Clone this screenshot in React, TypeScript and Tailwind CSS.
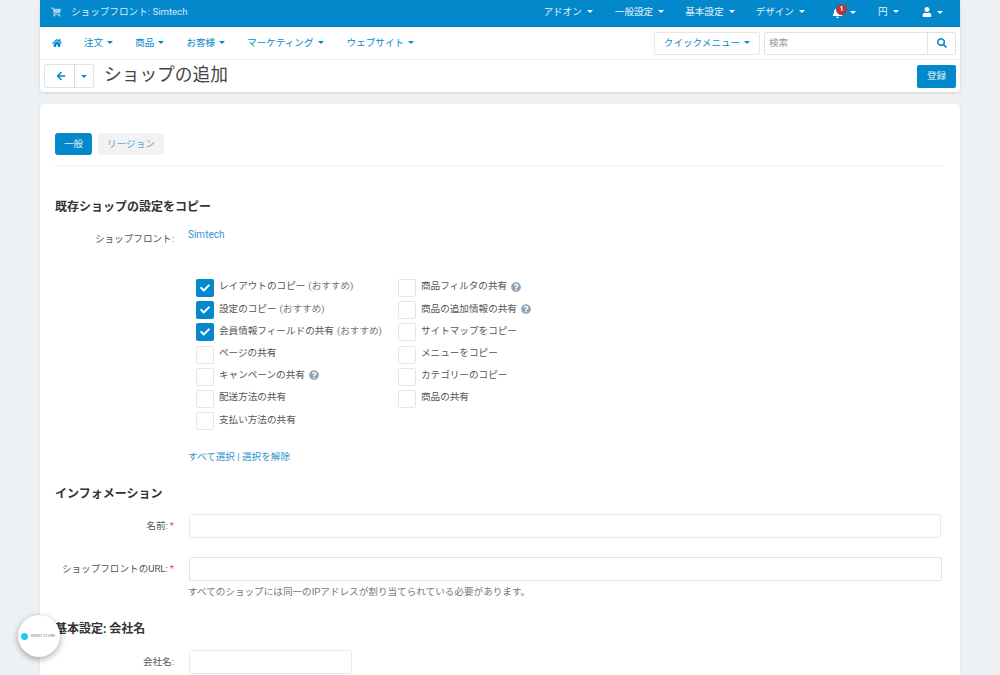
import { FaShoppingCart, FaHome, FaArrowLeft, FaBell, FaUser, FaSearch, FaCheck, FaQuestionCircle } from "react-icons/fa";

const Caret = ({ className = "border-t-white" }: { className?: string }) => (
  <span className={`inline-block w-0 h-0 border-x-[3px] border-x-transparent border-t-[3px] ${className}`} />
);

const TopItem = ({ label, className }: { label: string; className: string }) => (
  <span className={`flex items-center gap-[5px] text-[9.6px] text-[#e3f2fa] whitespace-nowrap ${className}`}>
    {label}
    <Caret />
  </span>
);

const NavItem = ({ label, className }: { label: string; className: string }) => (
  <span className={`flex items-center gap-[4px] text-[9.6px] text-[#0388cc] whitespace-nowrap ${className}`}>
    {label}
    <Caret className="border-t-[#0388cc]" />
  </span>
);

const Help = () => <FaQuestionCircle className="text-[#8fa3b5] text-[10px] ml-[4px] inline-block" />;

const Check = ({ label, note, help, on }: { label: string; note?: string; help?: boolean; on?: boolean }) => (
  <div className="flex items-center h-[22.2px]">
    {on ? (
      <span className="w-[18px] h-[18px] rounded-[2px] bg-[#0388cc] flex items-center justify-center shrink-0">
        <FaCheck className="text-white text-[10px]" />
      </span>
    ) : (
      <span className="w-[18px] h-[18px] rounded-[2px] border border-[#e6e6e6] bg-white shrink-0" />
    )}
    <span className="ml-[5px] mb-[3px] text-[9.6px] text-[#555] whitespace-nowrap flex items-center">
      {label}
      {note && <span className="text-[#777] ml-[3px]">{note}</span>}
      {help && <Help />}
    </span>
  </div>
);

const Label = ({ children, req, className = "" }: { children: React.ReactNode; req?: boolean; className?: string }) => (
  <div className={`w-[119px] text-right text-[9.6px] text-[#555] shrink-0 whitespace-nowrap ${className}`}>
    {children}
    {req && <span className="text-[#e5484d] ml-[2px]">*</span>}
  </div>
);

export default function App() {
  return (
    <div className="h-[675px] overflow-hidden bg-[#edf1f4] font-['Roboto','Noto_Sans_CJK_JP',sans-serif] relative">
      <div className="mx-[40px] w-[920px]">
        <div className="rounded-b-[4px] bg-white shadow-[0_1px_3px_rgba(0,0,0,0.12)]">
          <div className="h-[27px] bg-[#0388cc] border-b border-[#0379b5] flex items-center pl-[11px] pb-[2px]">
            <FaShoppingCart className="text-[#9fd2ee] text-[10px]" />
            <span className="ml-[10px] text-[9.6px] text-[#d7edf8] whitespace-nowrap">ショップフロント: Simtech</span>
            <TopItem label="アドオン" className="ml-[356px]" />
            <TopItem label="一般設定" className="ml-[22px]" />
            <TopItem label="基本設定" className="ml-[21px]" />
            <TopItem label="デザイン" className="ml-[21px]" />
            <span className="relative ml-[27px] flex items-center gap-[7px]">
              <FaBell className="text-white text-[11px]" />
              <span className="absolute -top-[3px] left-[4px] w-[11px] h-[11px] rounded-full bg-[#b03a3a] text-white text-[7px] font-bold flex items-center justify-center">1</span>
              <Caret />
            </span>
            <TopItem label="円" className="ml-[22px]" />
            <span className="ml-[23px] flex items-center gap-[5px]">
              <FaUser className="text-white text-[10px]" />
              <Caret />
            </span>
          </div>
          <div className="h-[33px] border-b border-[#f2f2f2] flex items-center pl-[12px] pr-[4px]">
            <FaHome className="text-[#0388cc] text-[10px]" />
            <NavItem label="注文" className="ml-[22px]" />
            <NavItem label="商品" className="ml-[22px]" />
            <NavItem label="お客様" className="ml-[22px]" />
            <NavItem label="マーケティング" className="ml-[22px]" />
            <NavItem label="ウェブサイト" className="ml-[23px]" />
            <div className="ml-auto h-[23px] w-[106px] rounded-[2px] border border-[#e6e8ea] flex items-center justify-center">
              <NavItem label="クイックメニュー" className="" />
            </div>
            <div className="ml-[4px] h-[23px] w-[192px] rounded-[2px] border border-[#e0e3e6] flex">
              <span className="flex-1 flex items-center pl-[4px] text-[9.6px] text-[#999]">検索</span>
              <span className="w-[28px] border-l border-[#e0e3e6] flex items-center justify-center">
                <FaSearch className="text-[#0388cc] text-[10px]" />
              </span>
            </div>
          </div>
          <div className="h-[32px] flex items-center pl-[4px] pr-[4px]">
            <div className="h-[24px] w-[50px] rounded-[2px] border border-[#e0e3e6] flex">
              <span className="w-[30px] border-r border-[#d5d9dd] flex items-center justify-center pl-[3px]">
                <FaArrowLeft className="text-[#0388cc] text-[10px]" />
              </span>
              <span className="flex-1 flex items-center justify-center">
                <Caret className="border-t-[#0388cc]" />
              </span>
            </div>
            <span className="ml-[10px] text-[17.7px] text-[#444] pb-[2px] whitespace-nowrap">ショップの追加</span>
            <span className="ml-auto w-[39px] h-[23px] rounded-[2px] bg-[#0388cc] text-[9.6px] text-[#e3f2fa] flex items-center justify-center">登録</span>
          </div>
        </div>

        <div className="mt-[12px] bg-white rounded-t-[4px] pl-[15px] pr-[16px] pt-[29px] h-[600px] shadow-[0_1px_3px_rgba(0,0,0,0.08)]">
          <div className="flex gap-[6px] pb-[10px] border-b border-[#f0f0f0]">
            <span className="w-[37px] h-[22px] rounded-[3px] bg-[#0388cc] text-[9.6px] text-[#e3f2fa] flex items-center justify-center">一般</span>
            <span className="w-[66px] h-[22px] rounded-[3px] bg-[#f2f2f2] text-[9.6px] text-[#5ba5d2] flex items-center justify-center">リージョン</span>
          </div>

          <h3 className="mt-[33px] text-[12px] font-bold text-[#333] leading-[16px]">既存ショップの設定をコピー</h3>

          <div className="mt-[14px] flex items-start">
            <Label className="mt-[3px] leading-[14px]">ショップフロント:</Label>
            <span className="ml-[14px] text-[10px] text-[#2f93cc] leading-[14px] -mt-[1px]">Simtech</span>
          </div>

          <div className="mt-[31px] ml-[141px] flex">
            <div className="w-[202px]">
              <Check on label="レイアウトのコピー" note="(おすすめ)" />
              <Check on label="設定のコピー" note="(おすすめ)" />
              <Check on label="会員情報フィールドの共有" note="(おすすめ)" />
              <Check label="ページの共有" />
              <Check label="キャンペーンの共有" help />
              <Check label="配送方法の共有" />
              <Check label="支払い方法の共有" />
            </div>
            <div>
              <Check label="商品フィルタの共有" help />
              <Check label="商品の追加情報の共有" help />
              <Check label="サイトマップをコピー" />
              <Check label="メニューをコピー" />
              <Check label="カテゴリーのコピー" />
              <Check label="商品の共有" />
            </div>
          </div>

          <div className="mt-[18px] ml-[133px] text-[9.6px] text-[#2f93cc] leading-[14px]">すべて選択 | 選択を解除</div>

          <h3 className="mt-[22px] text-[12px] font-bold text-[#333] leading-[16px]">インフォメーション</h3>

          <div className="mt-[12px] flex items-center">
            <Label req>名前:</Label>
            <div className="ml-[15px] w-[752px] h-[24px] rounded-[2px] border border-[#e8eaed] bg-white" />
          </div>

          <div className="mt-[19px] flex items-center">
            <Label req>ショップフロントのURL:</Label>
            <div className="ml-[15px] w-[753px] h-[24px] rounded-[2px] border border-[#dfe2e8] bg-white" />
          </div>
          <div className="mt-[4px] ml-[133px] text-[9.6px] text-[#777] leading-[14px]">すべてのショップには同一のIPアドレスが割り当てられている必要があります。</div>

          <h3 className="mt-[22px] text-[12px] font-bold text-[#333] leading-[16px]">基本設定: 会社名</h3>

          <div className="mt-[13px] flex items-center">
            <Label>会社名:</Label>
            <div className="ml-[15px] w-[163px] h-[24px] rounded-[2px] border border-[#e8eaed] bg-white" />
          </div>
        </div>
      </div>

      <div className="absolute left-[18px] top-[615px] w-[42px] h-[42px] rounded-full bg-white shadow-[0_2px_6px_rgba(0,0,0,0.35)] flex items-center justify-center gap-[3px] pr-[2px]">
        <span className="w-[7px] h-[7px] rounded-full bg-[#29c5f6]" />
        <span className="text-[4px] text-[#888] whitespace-nowrap">DEMO STORE</span>
      </div>
    </div>
  );
}
